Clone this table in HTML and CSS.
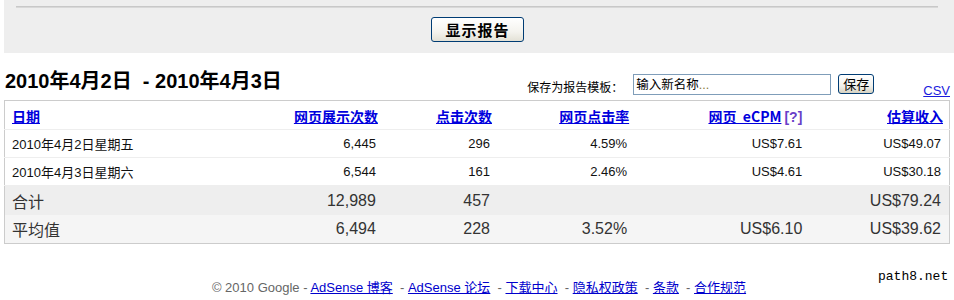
FILE: index.html
```html
<!DOCTYPE html>
<html lang="zh-CN">
<head>
<meta charset="utf-8">
<title>AdSense 报告</title>
<link rel="stylesheet" href="styles.css">
</head>
<body>
<div class="panel">
  <div class="rule"></div>
  <div class="btnrow"><button class="show" type="button">显示报告</button></div>
</div>
<div class="bar">
  <h1 class="title">2010年4月2日&nbsp; - 2010年4月3日</h1>
  <div class="save">
    <span class="save-label">保存为报告模板：</span>
    <span class="save-input">输入新名称<span class="dots">...</span></span>
    <button class="save-btn" type="button">保存</button>
  </div>
  <a class="csv" href="#">CSV</a>
</div>
<table class="report">
  <colgroup>
    <col class="c1"><col class="c2"><col class="c3"><col class="c4"><col class="c5"><col class="c6">
  </colgroup>
  <thead>
    <tr>
      <th class="left"><a href="#">日期<span class="sp"></span></a></th>
      <th><a href="#">网页展示次数<span class="sp"></span></a></th>
      <th><a href="#">点击次数<span class="sp"></span></a></th>
      <th><a href="#">网页点击率<span class="sp"></span></a></th>
      <th class="ecpm"><a href="#">网页&nbsp; eCPM<span class="sp2"></span></a><a class="help" href="#">[?]</a></th>
      <th><a href="#">估算收入<span class="sp"></span></a></th>
    </tr>
  </thead>
  <tbody>
    <tr class="data">
      <td class="left">2010年4月2日星期五</td><td>6,445</td><td>296</td><td>4.59%</td><td>US$7.61</td><td>US$49.07</td>
    </tr>
    <tr class="data">
      <td class="left">2010年4月3日星期六</td><td>6,544</td><td>161</td><td>2.46%</td><td>US$4.61</td><td>US$30.18</td>
    </tr>
    <tr class="total">
      <td class="left">合计</td><td>12,989</td><td>457</td><td></td><td></td><td>US$79.24</td>
    </tr>
    <tr class="avg">
      <td class="left">平均值</td><td>6,494</td><td>228</td><td>3.52%</td><td>US$6.10</td><td>US$39.62</td>
    </tr>
  </tbody>
</table>
<div class="footer">
  <span class="copy">© 2010 Google - </span><a href="#">AdSense 博客</a><span class="copy">&nbsp; - </span><a href="#">AdSense 论坛</a><span class="copy">&nbsp; - </span><a href="#">下载中心</a><span class="copy">&nbsp; - </span><a href="#">隐私权政策</a><span class="copy">&nbsp; - </span><a href="#">条款</a><span class="copy">&nbsp; - </span><a href="#">合作规范</a>
</div>
<div class="watermark">path8.net</div>
</body>
</html>
```

FILE: styles.css
```css
html, body {
  margin: 0;
  padding: 0;
  background: #ffffff;
}
body {
  font-family: "Liberation Sans", Arial, "Noto Sans CJK SC", sans-serif;
  color: #000;
  position: relative;
  width: 954px;
  height: 300px;
  overflow: hidden;
}
.panel {
  margin-left: 4px;
  height: 53px;
  background: #eeeeee;
  padding: 6px 16px 0 12px;
  box-sizing: border-box;
}
.rule {
  height: 1px;
  background: #c8c8c8;
  border-bottom: 1px solid #d8d8d8;
}
.btnrow {
  display: flex;
  justify-content: center;
  padding-top: 9px;
  padding-left: 1px;
}
.show {
  width: 93px;
  height: 25px;
  border: 1px solid #003c74;
  border-radius: 3px;
  background: linear-gradient(#ffffff, #f4f3ee 60%, #e3e1d6);
  font-family: "Noto Sans CJK SC", sans-serif;
  font-weight: bold;
  font-size: 15px;
  line-height: 21px;
  color: #000;
  padding: 0;
  letter-spacing: 1px;
}
.bar {
  display: flex;
  align-items: flex-start;
  height: 47px;
  margin-left: 4px;
  width: 946px;
}
.title {
  margin: 15px 0 0 1px;
  font-size: 20px;
  line-height: 26px;
  font-weight: bold;
  font-family: "Liberation Sans", Arial, "Noto Sans CJK SC", sans-serif;
  white-space: nowrap;
}
.save {
  margin-left: auto;
  margin-top: 21px;
  display: flex;
  align-items: center;
  height: 21px;
}
.save-label {
  font-family: "Noto Sans CJK SC", sans-serif;
  font-size: 12px;
  line-height: 14px;
  margin-top: 5px;
  margin-right: 10px;
  color: #000;
}
.save-input {
  box-sizing: border-box;
  width: 198px;
  height: 21px;
  border: 1px solid #7f9db9;
  background: #fff;
  font-family: "Noto Sans CJK SC", sans-serif;
  font-size: 12.5px;
  line-height: 18px;
  padding-left: 2px;
  color: #000;
}
.dots {
  color: #8a7a3a;
  font-family: "Liberation Sans", sans-serif;
}
.save-btn {
  box-sizing: border-box;
  margin-left: 7px;
  width: 36px;
  height: 20px;
  padding: 0;
  border: 1px solid #003c74;
  border-radius: 3px;
  background: linear-gradient(#ffffff, #f2f1ec 60%, #d6d2c2);
  font-family: "Noto Sans CJK SC", sans-serif;
  font-size: 13px;
  line-height: 16px;
  color: #000;
  align-self: flex-start;
}
.csv {
  margin-left: 49px;
  margin-top: 30px;
  font-size: 13px;
  line-height: 15px;
  color: #1a1add;
  text-decoration: underline;
}
.report {
  margin-left: 4px;
  width: 946px;
  border-collapse: collapse;
  table-layout: fixed;
  border: 1px solid #cccccc;
}
.c1 { width: 245px; }
.c2 { width: 134px; }
.c3 { width: 114px; }
.c4 { width: 137px; }
.c5 { width: 175px; }
.c6 { width: 139px; }
.report th, .report td {
  text-align: right;
  padding: 0 8px 0 0;
  white-space: nowrap;
}
.report .left {
  text-align: left;
  padding-left: 7px;
}
.report th {
  height: 27px;
  border-bottom: 1px solid #eeeeee;
  font-family: "Noto Sans CJK SC", sans-serif;
  font-size: 14px;
  font-weight: bold;
  padding-top: 1px;
  padding-right: 0;
}
.report th.ecpm {
  padding-right: 8px;
}
.report th a {
  color: #0000dd;
  text-decoration: underline;
}
.report th .sp {
  display: inline-block;
  width: 6px;
}
.report th .sp2 {
  display: inline-block;
  width: 3px;
}
.report th a.help {
  color: #6a3fc8;
  text-decoration: none;
  font-family: "Liberation Sans", sans-serif;
  font-size: 14px;
}
.data td {
  height: 27px;
  border-bottom: 1px solid #eeeeee;
  font-size: 13px;
  color: #111;
}
.total td {
  height: 29px;
  background: #eeeeee;
  font-size: 16px;
  color: #333333;
}
.avg td {
  height: 28px;
  background: #f5f5f5;
  font-size: 16px;
  color: #333333;
}
.footer {
  margin-top: 36px;
  text-align: center;
  font-size: 13px;
  line-height: 16px;
  padding-left: 4px;
  font-family: "Liberation Sans", Arial, "Noto Sans CJK SC", sans-serif;
}
.footer .copy {
  color: #666666;
}
.footer a {
  color: #0000cc;
  text-decoration: underline;
}
.watermark {
  position: absolute;
  left: 878px;
  top: 269px;
  font-family: "Liberation Mono", monospace;
  font-size: 13px;
  line-height: 16px;
  color: #000;
}
```
